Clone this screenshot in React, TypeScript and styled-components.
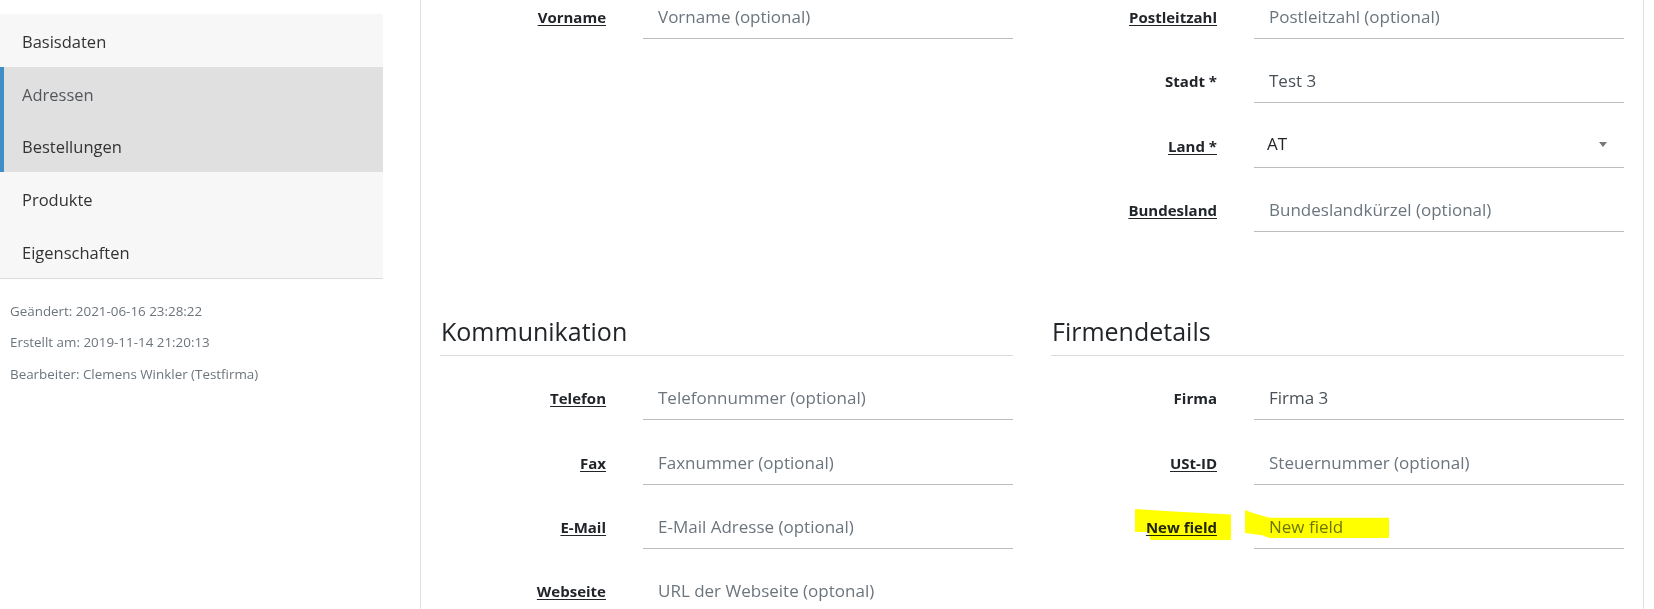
import React from 'react';
import styled, { createGlobalStyle, css } from 'styled-components';

const GlobalStyle = createGlobalStyle`
  html, body { margin: 0; padding: 0; height: 100%; overflow: hidden; background: #fff; }
  body { font-family: "Open Sans", "Noto Sans", sans-serif; color: #212529; }
  #root { height: 100%; }
  *, *::before, *::after { box-sizing: border-box; }
`;

const Page = styled.div`
  display: flex;
  height: 609px;
  overflow: hidden;
`;

const Sidebar = styled.aside`
  width: 383px;
  flex: none;
  padding-top: 14px;
`;

const Nav = styled.nav`
  display: flex;
  flex-direction: column;
  background: #f7f7f7;
  border-bottom: 1px solid #dcdcdc;
`;

const NavItem = styled.div<{ $active?: boolean; $muted?: boolean }>`
  height: 52.8px;
  display: flex;
  align-items: center;
  padding: 2px 0 0 22px;
  font-size: 16.5px;
  color: ${(p) => (p.$muted ? '#53575c' : '#333')};
  ${(p) =>
    p.$active &&
    css`
      background: #e0e0e0;
      border-left: 4px solid #3d8fc6;
      padding-left: 18px;
    `}
`;

const Meta = styled.div`
  display: flex;
  flex-direction: column;
  gap: 11.5px;
  padding: 22px 10px;
  font-size: 13.4px;
  line-height: 20px;
  color: #6c757d;
`;

const Main = styled.main`
  margin-left: 37px;
  width: 1224px;
  flex: none;
  height: 609px;
  overflow: hidden;
  border-left: 1px solid #e0e0e0;
  border-right: 1px solid #e0e0e0;
  padding: 0 19px;
`;

const FormGrid = styled.div`
  display: grid;
  grid-template-columns: 573px 573px;
  column-gap: 38px;
  row-gap: 84.3px;
  margin-top: -1px;
  align-items: start;
`;

const Section = styled.section`
  display: flex;
  flex-direction: column;
  gap: 24.33px;
`;

const SectionTitle = styled.h3`
  margin: 0;
  font-size: 25px;
  font-weight: 400;
  line-height: 30px;
  padding: 0 0 8.7px 1px;
  border-bottom: 1px solid #dcdcdc;
  color: #212529;
`;

const Row = styled.div`
  display: grid;
  grid-template-columns: 166px 1fr;
  column-gap: 37px;
  align-items: center;
  height: 40px;
`;

const Label = styled.label<{ $plain?: boolean }>`
  text-align: right;
  font-weight: 700;
  font-size: 15px;
  line-height: 20px;
  padding-bottom: 4px;
  color: #212529;
  text-decoration: ${(p) => (p.$plain ? 'none' : 'underline')};
  text-underline-offset: 2px;
`;

const FieldWrap = styled.div`
  position: relative;
  height: 40px;
`;

const Input = styled.input`
  display: block;
  width: 100%;
  height: 40px;
  border: none;
  border-bottom: 1px solid #bcbcbc;
  padding: 0 15px 4px;
  font-family: inherit;
  font-size: 17px;
  color: #495057;
  background: transparent;
  outline: none;
  &::placeholder {
    color: #6c757d;
    opacity: 1;
  }
`;

const SelectBox = styled.div`
  display: flex;
  align-items: center;
  justify-content: space-between;
  height: 40px;
  border-bottom: 1px solid #bcbcbc;
  padding: 0 17px 7px 13px;
  font-size: 17px;
  color: #212529;
`;

const Caret = styled.span`
  width: 0;
  height: 0;
  border-left: 4px solid transparent;
  border-right: 4px solid transparent;
  border-top: 5px solid #777;
  margin-top: 1px;
`;

const Mark = styled.span`
  position: relative;
  &::after {
    content: '';
    position: absolute;
    left: -11px;
    right: -14px;
    top: -8px;
    bottom: -3px;
    background: #ffff00;
    mix-blend-mode: multiply;
    pointer-events: none;
    clip-path: polygon(0 0, 40% 8%, 100% 18%, 100% 100%, 16% 100%, 14% 74%, 0 74%);
  }
`;

const FieldMark = styled.span`
  position: absolute;
  left: -9px;
  top: 1px;
  width: 144px;
  height: 28px;
  background: #ffff00;
  mix-blend-mode: multiply;
  pointer-events: none;
  clip-path: polygon(0 0, 6% 12%, 17% 28%, 100% 28%, 100% 100%, 17% 100%, 12% 90%, 0 82%);
`;

type Field = {
  label: string;
  placeholder?: string;
  value?: string;
  plain?: boolean;
  select?: boolean;
  highlight?: boolean;
};

const FormRow: React.FC<{ f: Field }> = ({ f }) => (
  <Row>
    <Label $plain={f.plain}>{f.highlight ? <Mark>{f.label}</Mark> : f.label}</Label>
    {f.select ? (
      <SelectBox>
        <span>{f.value}</span>
        <Caret />
      </SelectBox>
    ) : (
      <FieldWrap>
        <Input placeholder={f.placeholder} defaultValue={f.value} readOnly />
        {f.highlight && <FieldMark />}
      </FieldWrap>
    )}
  </Row>
);

const nameFields: Field[] = [{ label: 'Vorname', placeholder: 'Vorname (optional)' }];

const addressFields: Field[] = [
  { label: 'Postleitzahl', placeholder: 'Postleitzahl (optional)' },
  { label: 'Stadt *', value: 'Test 3', plain: true },
  { label: 'Land *', value: 'AT', select: true },
  { label: 'Bundesland', placeholder: 'Bundeslandkürzel (optional)' },
];

const commFields: Field[] = [
  { label: 'Telefon', placeholder: 'Telefonnummer (optional)' },
  { label: 'Fax', placeholder: 'Faxnummer (optional)' },
  { label: 'E-Mail', placeholder: 'E-Mail Adresse (optional)' },
  { label: 'Webseite', placeholder: 'URL der Webseite (optonal)' },
];

const companyFields: Field[] = [
  { label: 'Firma', value: 'Firma 3', plain: true },
  { label: 'USt-ID', placeholder: 'Steuernummer (optional)' },
  { label: 'New field', placeholder: 'New field', highlight: true },
];

export default function App() {
  return (
    <>
      <GlobalStyle />
      <Page>
        <Sidebar>
          <Nav>
            <NavItem>Basisdaten</NavItem>
            <NavItem $active $muted>Adressen</NavItem>
            <NavItem $active>Bestellungen</NavItem>
            <NavItem>Produkte</NavItem>
            <NavItem>Eigenschaften</NavItem>
          </Nav>
          <Meta>
            <div>Geändert: 2021-06-16 23:28:22</div>
            <div>Erstellt am: 2019-11-14 21:20:13</div>
            <div>Bearbeiter: Clemens Winkler (Testfirma)</div>
          </Meta>
        </Sidebar>
        <Main>
          <FormGrid>
            <Section>
              {nameFields.map((f) => (
                <FormRow key={f.label} f={f} />
              ))}
            </Section>
            <Section>
              {addressFields.map((f) => (
                <FormRow key={f.label} f={f} />
              ))}
            </Section>
            <Section>
              <SectionTitle>Kommunikation</SectionTitle>
              {commFields.map((f) => (
                <FormRow key={f.label} f={f} />
              ))}
            </Section>
            <Section>
              <SectionTitle>Firmendetails</SectionTitle>
              {companyFields.map((f) => (
                <FormRow key={f.label} f={f} />
              ))}
            </Section>
          </FormGrid>
        </Main>
      </Page>
    </>
  );
}
